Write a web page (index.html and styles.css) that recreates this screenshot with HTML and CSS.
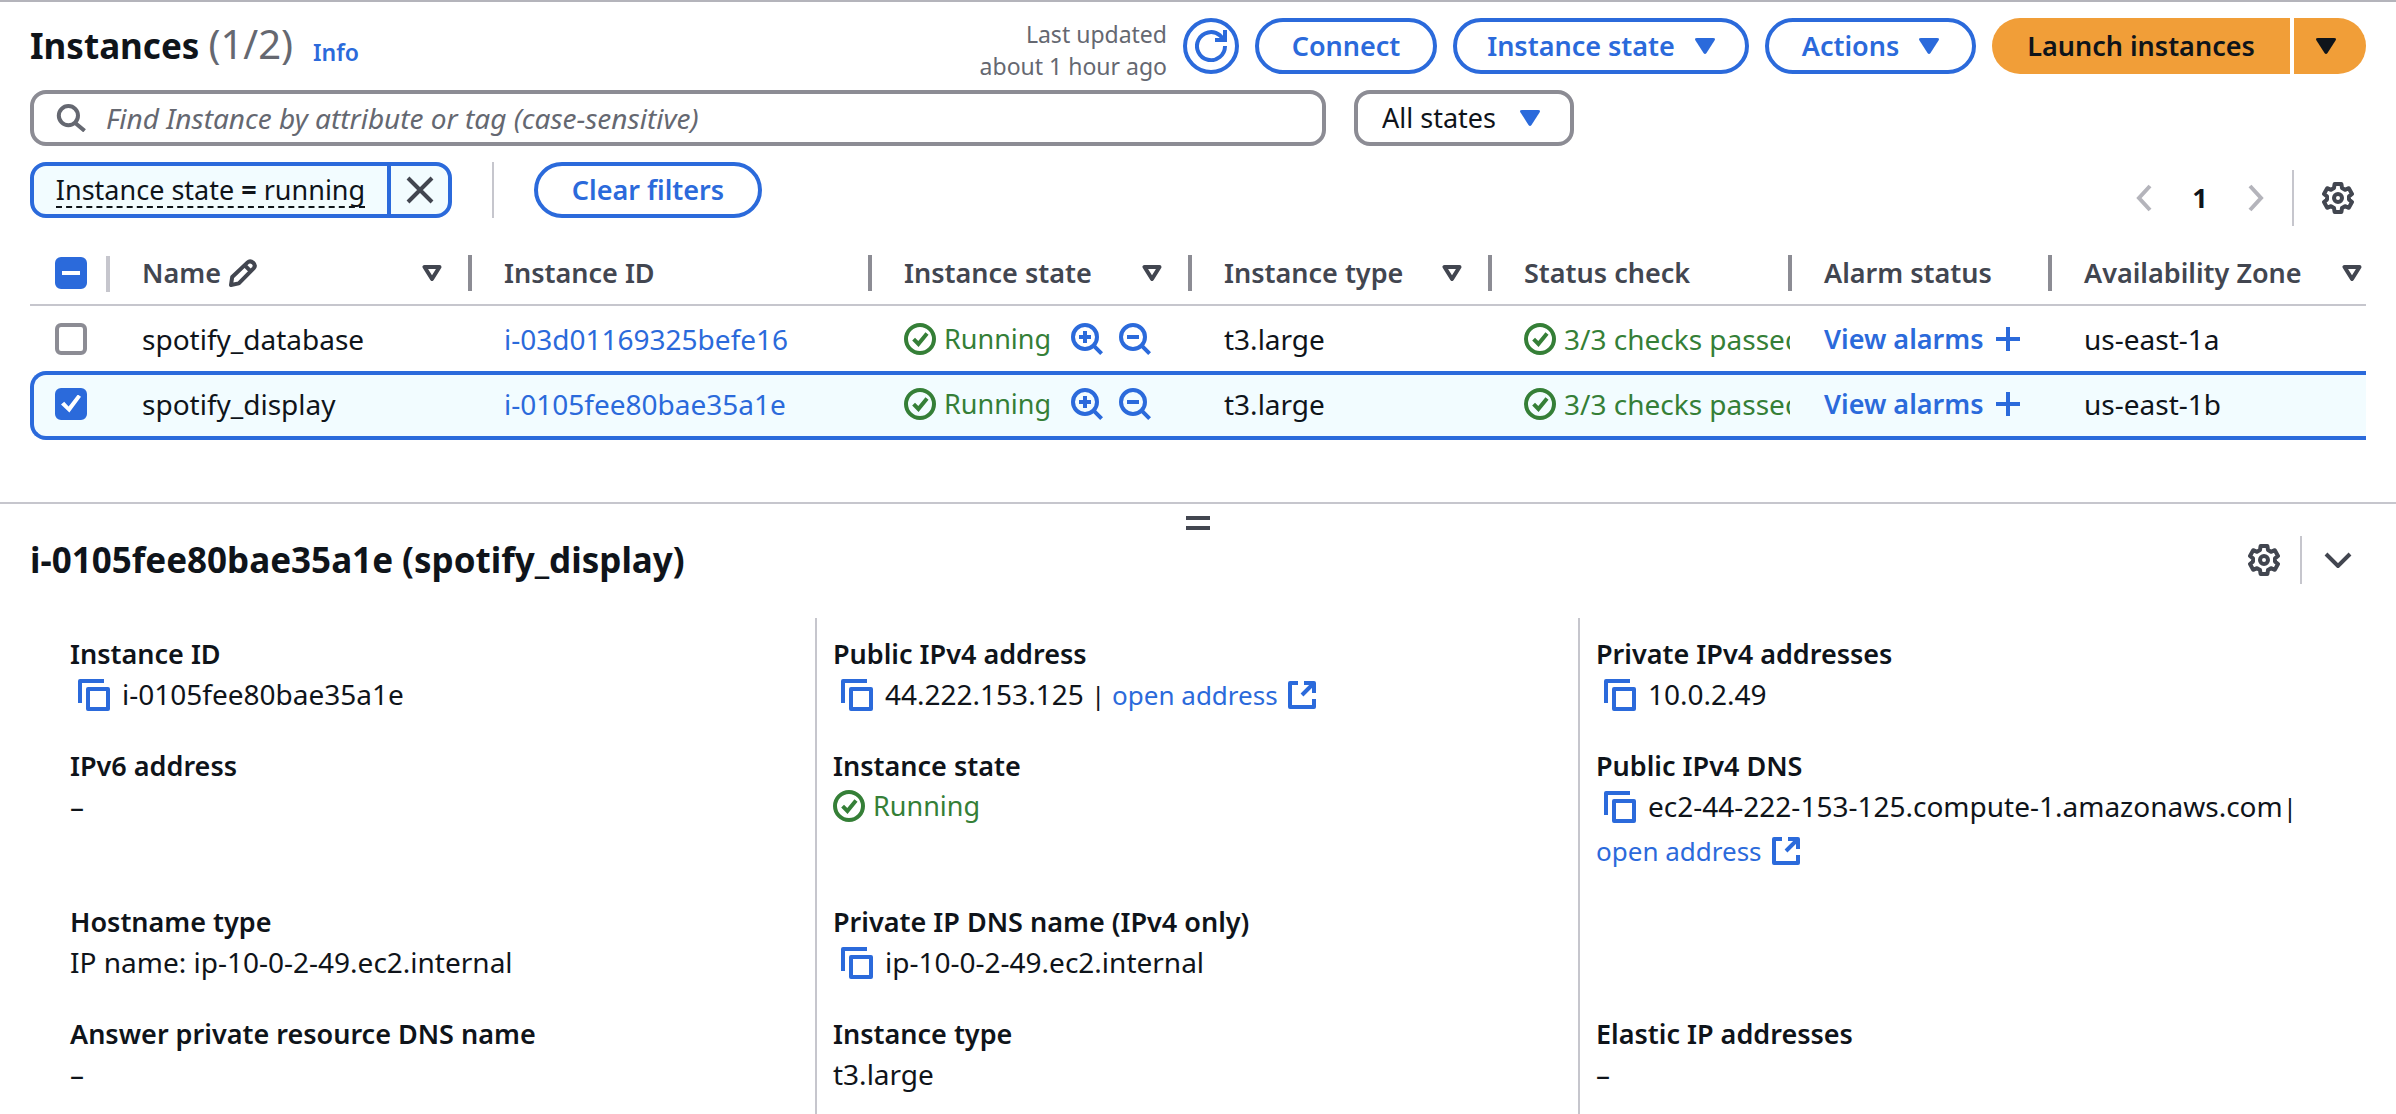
FILE: index.html
```html
<!DOCTYPE html>
<html lang="en">
<head>
<meta charset="utf-8">
<title>Instances | EC2</title>
<link rel="stylesheet" href="styles.css">
</head>
<body>
<svg class="sprite" aria-hidden="true">
  <symbol id="i-caret" viewBox="0 0 20 16"><path d="M2 0h16q3 0 1.500 2.500l-8 12.500q-1.500 2-3 0l-8-12.500Q-1 0 2 0z" fill="currentColor"/></symbol>
  <symbol id="i-sort" viewBox="0 0 20 16"><path d="M2.500 2h15L10 14z" fill="none" stroke="currentColor" stroke-width="4" stroke-linejoin="round"/></symbol>
  <symbol id="i-gear" viewBox="0 0 16 16"><g fill="none" stroke="currentColor" stroke-width="2" stroke-linejoin="round"><path d="M6.300 1h3.400l.3 2 1.500.9 1.900-.8 1.600 2.900-1.500 1.200v1.600l1.500 1.200-1.600 2.900-1.900-.8-1.500.9-.3 2H6.300L6 13l-1.500-.9-1.900.8L1 10l1.500-1.200V7.200L1 6l1.600-2.900 1.900.8L6 3z"/><circle cx="8" cy="8" r="2"/></g></symbol>
  <symbol id="i-ok" viewBox="0 0 16 16"><g fill="none" stroke="currentColor" stroke-width="2"><circle cx="8" cy="8" r="7"/><path d="M4.800 8.100l2.400 2.400 4.300-5.200"/></g></symbol>
  <symbol id="i-zin" viewBox="0 0 16 16"><path d="M7 4v6M4 7h6M11.200 11.200l4.100 4.100M13 7A6 6 0 1 1 1 7a6 6 0 0 1 12 0z" fill="none" stroke="currentColor" stroke-width="2"/></symbol>
  <symbol id="i-zout" viewBox="0 0 16 16"><path d="M4 7h6M11.200 11.200l4.100 4.100M13 7A6 6 0 1 1 1 7a6 6 0 0 1 12 0z" fill="none" stroke="currentColor" stroke-width="2"/></symbol>
  <symbol id="i-copy" viewBox="0 0 16 16"><path d="M1 12V1h12M5 5h10v10H5z" fill="none" stroke="currentColor" stroke-width="2" stroke-linejoin="round"/></symbol>
  <symbol id="i-ext" viewBox="0 0 14 14"><path d="M5 1H1v12h12V9M8 1h5v5M13 1L7 7" fill="none" stroke="currentColor" stroke-width="2" stroke-linejoin="round"/></symbol>
  <symbol id="i-plus" viewBox="0 0 12 12"><path d="M6 0v12M0 6h12" stroke="currentColor" stroke-width="2"/></symbol>
</svg>

<main class="instances">
  <header class="title-bar">
    <h1 class="title">Instances <span class="count">(1/2)</span></h1>
    <a class="info" href="#info">Info</a>
    <div class="actions">
      <p class="updated">Last updated<br>about 1 hour ago</p>
      <button class="btn btn-round" aria-label="Refresh"><svg class="icon" viewBox="0 0 16 16"><path d="M15 8a7 7 0 1 1-2.500-5.300L14 4.300M10 5h5V0" fill="none" stroke="currentColor" stroke-width="2"/></svg></button>
      <button class="btn btn-connect">Connect</button>
      <button class="btn btn-state">Instance state<svg class="caret"><use href="#i-caret"/></svg></button>
      <button class="btn btn-actions">Actions<svg class="caret"><use href="#i-caret"/></svg></button>
      <div class="split">
        <button class="btn btn-primary btn-launch">Launch instances</button>
        <button class="btn btn-primary btn-more" aria-label="More launch options"><svg class="caret"><use href="#i-caret"/></svg></button>
      </div>
    </div>
  </header>

  <div class="search-row">
    <label class="search">
      <svg class="search-icon" viewBox="0 0 15 14"><path d="M9 9l5.300 4.400M11 5.800a4.800 4.800 0 1 1-9.600 0 4.800 4.800 0 0 1 9.600 0z" fill="none" stroke="currentColor" stroke-width="2"/></svg>
      <input class="search-input" type="text" aria-label="Find Instance" placeholder="Find Instance by attribute or tag (case-sensitive)">
    </label>
    <label class="states">
      <select class="states-select" aria-label="State filter"><option>All states</option></select>
      <svg class="caret states-caret"><use href="#i-caret"/></svg>
    </label>
  </div>

  <div class="filter-row">
    <div class="token">
      <button class="token-label"><span class="token-text">Instance state <b>=</b> running</span></button>
      <button class="token-close" aria-label="Remove filter"><svg class="close-icon" viewBox="0 0 14 14"><path d="M1 1l12 12M13 1L1 13" stroke="currentColor" stroke-width="2"/></svg></button>
    </div>
    <span class="rule"></span>
    <button class="btn btn-clear">Clear filters</button>
    <nav class="pages" aria-label="Pages">
      <button class="plain page-arrow" aria-label="Previous page"><svg class="arrow-icon" viewBox="0 0 8 14"><path d="M7 1L1.500 7 7 13" fill="none" stroke="currentColor" stroke-width="2"/></svg></button>
      <span class="page-number">1</span>
      <button class="plain page-arrow" aria-label="Next page"><svg class="arrow-icon" viewBox="0 0 8 14"><path d="M1 1l5.500 6L1 13" fill="none" stroke="currentColor" stroke-width="2"/></svg></button>
      <span class="rule page-rule"></span>
      <button class="plain" aria-label="Preferences"><svg class="icon"><use href="#i-gear"/></svg></button>
    </nav>
  </div>

  <table class="table">
    <colgroup><col class="c-check"><col class="c-name"><col class="c-id"><col class="c-state"><col class="c-type"><col class="c-status"><col class="c-alarm"><col class="c-zone"></colgroup>
    <thead>
      <tr>
        <th class="check"><input class="box mixed" type="checkbox" aria-label="Select all"></th>
        <th><div class="head">Name<svg class="pencil" viewBox="0 0 14 14"><path d="M1 13l.6-4L9.300 1.700q1.300-1.200 2.800.2t.2 2.800L4.900 12.200zM8 3.300l2.800 2.800" fill="none" stroke="currentColor" stroke-width="2" stroke-linejoin="round"/></svg><svg class="sort"><use href="#i-sort"/></svg></div></th>
        <th><div class="head">Instance ID</div></th>
        <th><div class="head">Instance state<svg class="sort"><use href="#i-sort"/></svg></div></th>
        <th><div class="head">Instance type<svg class="sort"><use href="#i-sort"/></svg></div></th>
        <th><div class="head">Status check</div></th>
        <th><div class="head">Alarm status</div></th>
        <th><div class="head">Availability Zone<svg class="sort"><use href="#i-sort"/></svg></div></th>
      </tr>
    </thead>
    <tbody>
      <tr>
        <td class="check"><input class="box" type="checkbox" aria-label="Select spotify_database"></td>
        <td>spotify_database</td>
        <td><a href="#i-03d01169325befe16">i-03d01169325befe16</a></td>
        <td><div class="cell"><span class="ok running"><svg class="icon"><use href="#i-ok"/></svg>Running</span><button class="plain zoom" aria-label="Include running"><svg class="icon"><use href="#i-zin"/></svg></button><button class="plain zoom" aria-label="Exclude running"><svg class="icon"><use href="#i-zout"/></svg></button></div></td>
        <td>t3.large</td>
        <td><div class="cell"><span class="ok"><svg class="icon"><use href="#i-ok"/></svg>3/3 checks passed</span></div></td>
        <td><a class="alarms" href="#alarms">View alarms<svg class="plus"><use href="#i-plus"/></svg></a></td>
        <td>us-east-1a</td>
      </tr>
      <tr class="selected">
        <td class="check"><input class="box" type="checkbox" checked aria-label="Select spotify_display"></td>
        <td>spotify_display</td>
        <td><a href="#i-0105fee80bae35a1e">i-0105fee80bae35a1e</a></td>
        <td><div class="cell"><span class="ok running"><svg class="icon"><use href="#i-ok"/></svg>Running</span><button class="plain zoom" aria-label="Include running"><svg class="icon"><use href="#i-zin"/></svg></button><button class="plain zoom" aria-label="Exclude running"><svg class="icon"><use href="#i-zout"/></svg></button></div></td>
        <td>t3.large</td>
        <td><div class="cell"><span class="ok"><svg class="icon"><use href="#i-ok"/></svg>3/3 checks passed</span></div></td>
        <td><a class="alarms" href="#alarms">View alarms<svg class="plus"><use href="#i-plus"/></svg></a></td>
        <td>us-east-1b</td>
      </tr>
    </tbody>
  </table>
</main>

<section class="panel">
  <div class="handle"></div>
  <header class="panel-bar">
    <h2 class="panel-title">i-0105fee80bae35a1e (spotify_display)</h2>
    <button class="plain" aria-label="Panel preferences"><svg class="icon"><use href="#i-gear"/></svg></button>
    <span class="rule panel-rule"></span>
    <button class="plain" aria-label="Close panel"><svg class="chevron" viewBox="0 0 28 16"><path d="M2 2l12 12L26 2" fill="none" stroke="currentColor" stroke-width="4"/></svg></button>
  </header>
  <dl class="details">
    <div class="item"><dt>Instance ID</dt><dd><button class="plain copy" aria-label="Copy"><svg class="icon"><use href="#i-copy"/></svg></button>i-0105fee80bae35a1e</dd></div>
    <div class="item"><dt>Public IPv4 address</dt><dd><button class="plain copy" aria-label="Copy"><svg class="icon"><use href="#i-copy"/></svg></button>44.222.153.125 <span class="open">| <a href="#open">open address<svg class="ext"><use href="#i-ext"/></svg></a></span></dd></div>
    <div class="item"><dt>Private IPv4 addresses</dt><dd><button class="plain copy" aria-label="Copy"><svg class="icon"><use href="#i-copy"/></svg></button>10.0.2.49</dd></div>

    <div class="item"><dt>IPv6 address</dt><dd>–</dd></div>
    <div class="item"><dt>Instance state</dt><dd class="dd-status"><span class="ok running"><svg class="icon"><use href="#i-ok"/></svg>Running</span></dd></div>
    <div class="item"><dt>Public IPv4 DNS</dt><dd><button class="plain copy" aria-label="Copy"><svg class="icon"><use href="#i-copy"/></svg></button>ec2-44-222-153-125.compute-1.amazonaws.com<span class="open">|<br><a href="#open">open address<svg class="ext"><use href="#i-ext"/></svg></a></span></dd></div>

    <div class="item"><dt>Hostname type</dt><dd>IP name: ip-10-0-2-49.ec2.internal</dd></div>
    <div class="item"><dt>Private IP DNS name (IPv4 only)</dt><dd><button class="plain copy" aria-label="Copy"><svg class="icon"><use href="#i-copy"/></svg></button>ip-10-0-2-49.ec2.internal</dd></div>
    <div class="item"></div>

    <div class="item"><dt>Answer private resource DNS name</dt><dd>–</dd></div>
    <div class="item"><dt>Instance type</dt><dd>t3.large</dd></div>
    <div class="item"><dt>Elastic IP addresses</dt><dd>–</dd></div>
  </dl>
</section>
</body>
</html>
```
FILE: styles.css
```css
:root {
  --ink: #0f141a;
  --head: #424650;
  --muted: #656871;
  --blue: #2b6adb;
  --green: #357f37;
  --line: #c6c6cd;
  --control: #8c8c94;
  --tint: #f2fcff;
}
* { box-sizing: border-box; }
body {
  margin: 0;
  min-height: 100vh;
  display: flex;
  flex-direction: column;
  background: #fff;
  color: var(--ink);
  font: 27px/36px "Noto Sans", "Open Sans", sans-serif;
}
button, input, select { font: inherit; color: inherit; margin: 0; }
button { cursor: pointer; white-space: nowrap; }
a { color: var(--blue); text-decoration: none; }
svg { flex: none; }
h1, h2, p, dl, dd { margin: 0; }
.sprite { display: none; }

.icon { display: block; width: 32px; height: 32px; }
.caret { width: 20px; height: 16px; }
.plain { display: block; padding: 0; border: 0; background: none; color: var(--head); }
.rule { width: 2px; height: 56px; background: var(--line); }

.instances { padding: 16px 30px 62px; border-top: 2px solid #b4b4bb; }

.title-bar { display: flex; height: 56px; }
.title { font-size: 35px; line-height: 56px; font-weight: 700; }
.count { color: var(--muted); font-size: 40px; font-weight: 400; line-height: 40px; }
.info { margin-left: 20px; font-size: 23px; line-height: 68px; font-weight: 600; }
.actions { display: flex; gap: 16px; margin-left: auto; }
.updated { font-size: 23px; line-height: 32px; text-align: right; color: var(--muted); }

.btn {
  display: flex;
  align-items: center;
  justify-content: center;
  gap: 20px;
  height: 56px;
  padding: 0;
  border: 4px solid var(--blue);
  border-radius: 28px;
  background: #fff;
  color: var(--blue);
  font-weight: 600;
}
.btn-round { width: 56px; }
.btn-connect { width: 182px; }
.btn-state { width: 296px; }
.btn-actions { width: 211px; }
.btn-clear { width: 228px; }
.split { display: flex; gap: 4px; }
.btn-primary { border: 0; background: #f19e38; color: var(--ink); }
.btn-launch { width: 298px; border-radius: 28px 0 0 28px; }
.btn-more { width: 72px; padding-right: 8px; border-radius: 0 28px 28px 0; }

.search-row { display: flex; gap: 28px; margin-top: 16px; }
.search {
  flex: 0 1 1296px;
  display: flex;
  align-items: center;
  gap: 20px;
  height: 56px;
  padding: 0 22px;
  border: 4px solid var(--control);
  border-radius: 16px;
  color: var(--muted);
}
.search-icon { width: 30px; height: 28px; }
.search-input { flex: 1; min-width: 0; padding: 0; border: 0; outline: 0; background: none; color: var(--ink); font-size: 28px; }
.search-input::placeholder { color: var(--muted); opacity: 1; font-style: italic; }
.states { position: relative; width: 220px; }
.states-select {
  appearance: none;
  width: 100%;
  height: 56px;
  padding: 0 24px;
  border: 4px solid var(--control);
  border-radius: 16px;
  background: #fff;
}
.states-caret { position: absolute; right: 34px; top: 20px; color: var(--blue); pointer-events: none; }

.filter-row { display: flex; height: 64px; margin-top: 16px; }
.token { display: flex; width: 422px; height: 56px; border: 4px solid var(--blue); border-radius: 16px; background: var(--tint); overflow: hidden; }
.token-label { flex: 1; padding: 0; border: 0; border-right: 4px solid var(--blue); background: none; }
.token-text { border-bottom: 2px dashed var(--ink); line-height: 32px; display: inline-block; }
.token-close { display: grid; place-items: center; width: 57px; padding: 0; border: 0; background: none; color: var(--head); }
.close-icon { width: 28px; height: 28px; }
.filter-row > .rule { margin: 0 40px; }

.pages { display: flex; align-items: center; align-self: flex-end; margin-left: auto; padding-right: 12px; }
.page-arrow { color: #b4b4bb; }
.arrow-icon { display: block; width: 16px; height: 28px; }
.page-number { width: 96px; text-align: center; font-weight: 700; }
.page-rule { margin: 0 28px; }

.table { width: 100%; margin-top: 16px; border-collapse: separate; border-spacing: 0; table-layout: fixed; }
.c-check { width: 80px; }
.c-name { width: 362px; }
.c-id { width: 400px; }
.c-state { width: 320px; }
.c-type, .c-status { width: 300px; }
.c-alarm { width: 260px; }
th { height: 64px; padding: 0; border-bottom: 2px solid var(--line); color: var(--head); font-weight: 600; text-align: left; }
.head { display: flex; align-items: center; height: 36px; padding: 0 26px 0 32px; border-right: 4px solid var(--control); white-space: nowrap; }
th:last-child .head { border: 0; padding-right: 4px; }
th.check { background: linear-gradient(var(--line), var(--line)) right 0 top 14px / 4px 36px no-repeat; }
.sort { width: 20px; height: 16px; margin-left: auto; }
.pencil { width: 28px; height: 28px; margin-left: 8px; }
td { height: 65px; padding: 0 0 0 32px; white-space: nowrap; font-size: 28px; }
.check { padding: 0 0 0 25px; }
.cell { display: flex; align-items: center; margin-right: 2px; overflow: hidden; }
.ok { display: inline-flex; align-items: center; gap: 8px; color: var(--green); }
.running { font-size: 27px; }
.zoom { margin-left: 16px; color: var(--blue); }
.ok + .zoom { margin-left: 20px; }
.alarms { display: flex; align-items: center; gap: 12px; font-size: 27px; font-weight: 600; }
.plus { width: 24px; height: 24px; }

.box { appearance: none; display: grid; place-items: center; width: 32px; height: 32px; border: 4px solid var(--control); border-radius: 6px; background: #fff; }
.box.mixed, .box:checked { border-color: var(--blue); background: var(--blue); }
.mixed::before { content: ""; width: 18px; height: 4px; background: #fff; }
.box:checked::before { content: ""; width: 20px; height: 18px; background: #fff; clip-path: polygon(0 55%, 16% 40%, 38% 66%, 84% 0, 100% 12%, 42% 100%); }

.selected td { height: 69px; border: 4px solid var(--blue); border-width: 4px 0; background: var(--tint); padding-bottom: 4px; }
.selected td:first-child { padding-left: 21px; border-left-width: 4px; border-radius: 16px 0 0 16px; }

.panel { flex: 1; display: flex; flex-direction: column; padding-top: 12px; border-top: 2px solid var(--line); }
.handle { align-self: center; width: 24px; height: 14px; border: solid var(--head); border-width: 4px 0; }
.panel-bar { display: flex; align-items: center; height: 48px; margin: 6px 44px 34px 30px; }
.panel-title { flex: 1; font-size: 35px; line-height: 48px; font-weight: 700; }
.panel-rule { height: 48px; margin: 0 22px 0 20px; }
.chevron { display: block; width: 28px; height: 16px; }

.details { flex: 1; display: grid; grid-template-columns: repeat(3, 1fr); grid-template-rows: auto auto auto 1fr; margin: 0 55px 0 52px; }
.item { padding: 0 0 32px 16px; border-left: 2px solid var(--line); }
.item:nth-child(3n + 1) { border-color: transparent; }
.item:nth-child(-n + 3) { padding-top: 18px; }
.item:nth-last-child(-n + 3) { padding-bottom: 0; }
dt { font-weight: 600; }
dd { font-size: 28px; line-height: 44px; }
.dd-status { display: flex; }
.copy { display: inline-block; height: 32px; margin: 0 12px 0 8px; vertical-align: -6px; color: var(--blue); line-height: 32px; }
.open { font-size: 26px; line-height: 40px; }
.ext { width: 28px; height: 28px; margin-left: 10px; vertical-align: -4px; }
```
